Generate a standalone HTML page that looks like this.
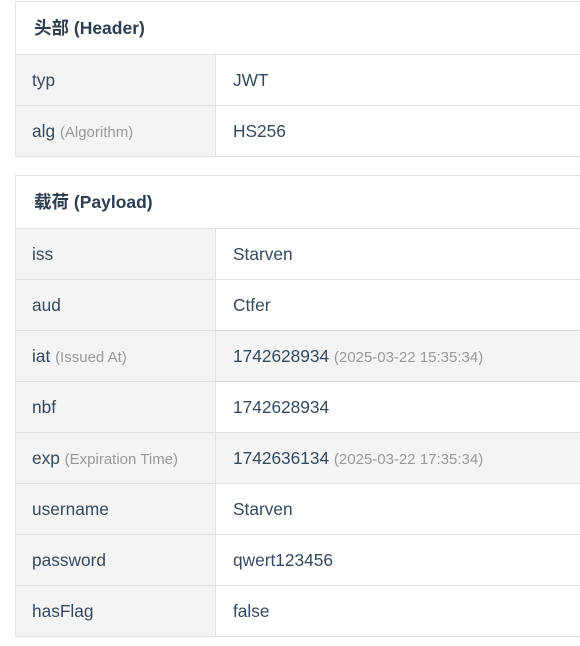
<!DOCTYPE html>
<html><head><meta charset="utf-8"><style>
body{margin:0;background:#fff;font-family:"Liberation Sans","Noto Sans CJK SC",sans-serif;color:#34495e;width:580px;height:646px;overflow:hidden;position:relative}
.t{position:absolute;left:15px;width:600px;border:1px solid #dfe2e5;box-sizing:border-box}
.h{height:52px;line-height:52px;padding-left:18px;font-weight:bold;font-size:17.5px;color:#2c3e50;background:#fff}
.r{height:51px;border-top:1px solid #dfe2e5;box-sizing:border-box;display:flex;font-size:17.3px;line-height:50px}
.k{width:200px;background:#f4f4f4;border-right:1px solid #dfe2e5;padding-left:16px;box-sizing:border-box}
.v{padding-left:17px;flex:1}
.g{background:#f4f4f4}
.s{color:#999;font-size:15px}
</style></head><body>
<div class="t" style="top:1px">
<div class="h">头部 (Header)</div>
<div class="r"><div class="k">typ</div><div class="v">JWT</div></div>
<div class="r"><div class="k">alg <span class="s">(Algorithm)</span></div><div class="v">HS256</div></div>
</div>
<div class="t" style="top:175px">
<div class="h">载荷 (Payload)</div>
<div class="r"><div class="k">iss</div><div class="v">Starven</div></div>
<div class="r"><div class="k">aud</div><div class="v">Ctfer</div></div>
<div class="r"><div class="k">iat <span class="s">(Issued At)</span></div><div class="v g">1742628934 <span class="s">(2025-03-22 15:35:34)</span></div></div>
<div class="r"><div class="k">nbf</div><div class="v">1742628934</div></div>
<div class="r"><div class="k">exp <span class="s">(Expiration Time)</span></div><div class="v g">1742636134 <span class="s">(2025-03-22 17:35:34)</span></div></div>
<div class="r"><div class="k">username</div><div class="v">Starven</div></div>
<div class="r"><div class="k">password</div><div class="v">qwert123456</div></div>
<div class="r"><div class="k">hasFlag</div><div class="v">false</div></div>
</div>
</body></html>
